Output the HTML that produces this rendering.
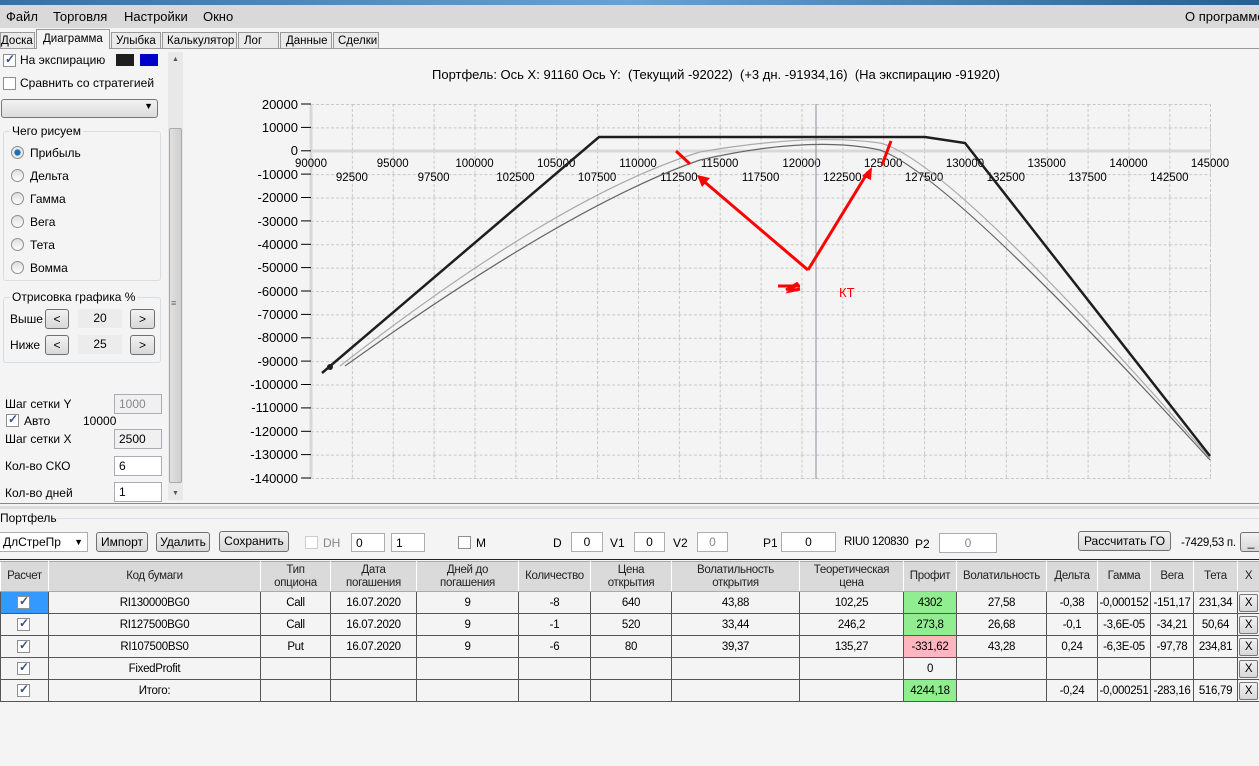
<!DOCTYPE html>
<html><head><meta charset="utf-8"><style>
*{box-sizing:border-box;margin:0;padding:0}
body{width:1259px;height:766px;overflow:hidden;background:#f4f4f4;font-family:"Liberation Sans",sans-serif;font-size:12px;color:#000;position:relative}
.a{position:absolute;white-space:nowrap}
.btn{position:absolute;border:1px solid #707070;border-radius:3px;background:linear-gradient(#f2f2f2,#d8d8d8);text-align:center;line-height:18px;font-size:12px;white-space:nowrap}
.inp{position:absolute;border:1px solid #abadb3;background:#fff;line-height:18px;padding-left:4px}
.cb{position:absolute;width:13px;height:13px;border:1px solid #8e8f8f;background:#fff}
.cb.c::after{content:"✓";position:absolute;left:1px;top:-3px;font-size:12px;color:#3a4f8a;font-weight:bold}
.rd{position:absolute;width:13px;height:13px;border-radius:50%;border:1px solid #8e8f8f;background:linear-gradient(#ddd,#fff)}
.grp{position:absolute;border:1px solid #d5dfe5;border-radius:3px}
.grp span{position:absolute;top:-8px;left:6px;background:#f4f4f4;padding:0 2px;white-space:nowrap}
.tab{position:absolute;top:32px;height:17px;border:1px solid #999;background:#eaeaea;font-size:11.5px;padding:2px 0 0 4px;white-space:nowrap;overflow:hidden}
table{position:absolute;left:0;top:561px;border-collapse:collapse;font-size:11.5px;letter-spacing:-0.3px;table-layout:fixed;width:1259px}
td{border:1px solid #555;text-align:center;height:22px;padding:0;background:#f4f4f4;white-space:nowrap;overflow:hidden}
tr.h td{background:#dadada;border-color:#aaa #fff;height:30px;line-height:13px;color:#222}
.g{background:#90ee90!important}.p{background:#ffb6c1!important}
.x{display:inline-block;width:19px;height:18px;border:1px solid #777;border-radius:2px;background:linear-gradient(#f2f2f2,#d8d8d8);line-height:16px}
</style></head><body>
<div class="a" style="left:0;top:0;width:1259px;height:5px;background:linear-gradient(90deg,#3a6ea5,#6d9fd0,#2c5d92)"></div>
<div class="a" style="left:0;top:5px;width:1259px;height:23px;background:#d9d9d9;font-size:13px">
<span class="a" style="left:6px;top:4px">Файл</span><span class="a" style="left:53px;top:4px">Торговля</span><span class="a" style="left:124px;top:4px">Настройки</span><span class="a" style="left:203px;top:4px">Окно</span><span class="a" style="left:1185px;top:4px">О программе</span></div>
<!-- tabs -->
<div class="a" style="left:0;top:48px;width:1259px;height:1px;background:#999"></div>
<div class="tab" style="left:0;width:35px;padding-left:0">Доска</div>
<div class="tab" style="left:36px;top:29px;width:74px;height:20px;border-bottom:none;background:#f4f4f4;padding:3px 0 0 6px">Диаграмма</div>
<div class="tab" style="left:111px;width:50px">Улыбка</div>
<div class="tab" style="left:162px;width:75px">Калькулятор</div>
<div class="tab" style="left:238px;width:41px;padding-left:5px">Лог</div>
<div class="tab" style="left:280px;width:52px;padding-left:5px">Данные</div>
<div class="tab" style="left:333px;width:46px">Сделки</div>
<!-- left panel -->
<div class="cb c" style="left:3px;top:54px"></div><span class="a" style="left:20px;top:53px">На экспирацию</span>
<div class="a" style="left:116px;top:54px;width:18px;height:12px;background:#1e1e1e"></div>
<div class="a" style="left:140px;top:54px;width:18px;height:12px;background:#0000c8"></div>
<div class="cb" style="left:3px;top:77px"></div><span class="a" style="left:20px;top:76px">Сравнить со стратегией</span>
<div class="a" style="left:1px;top:99px;width:157px;height:19px;border:1px solid #777;border-radius:3px;background:linear-gradient(#f2f2f2,#dcdcdc)"><span class="a" style="right:4px;top:1px;font-size:9px">▼</span></div>
<div class="grp" style="left:3px;top:131px;width:158px;height:150px"><span>Чего рисуем</span></div>
<div class="rd" style="left:11px;top:146px;background:radial-gradient(#1a6fb8 35%,#e8e8e8 45%)"></div><span class="a" style="left:30px;top:146px">Прибыль</span>
<div class="rd" style="left:11px;top:169px"></div><span class="a" style="left:30px;top:169px">Дельта</span>
<div class="rd" style="left:11px;top:192px"></div><span class="a" style="left:30px;top:192px">Гамма</span>
<div class="rd" style="left:11px;top:215px"></div><span class="a" style="left:30px;top:215px">Вега</span>
<div class="rd" style="left:11px;top:238px"></div><span class="a" style="left:30px;top:238px">Тета</span>
<div class="rd" style="left:11px;top:261px"></div><span class="a" style="left:30px;top:261px">Вомма</span>
<div class="grp" style="left:3px;top:297px;width:158px;height:66px"><span>Отрисовка графика %</span></div>
<span class="a" style="left:10px;top:312px">Выше</span><div class="btn" style="left:45px;top:309px;width:24px;height:20px">&lt;</div>
<div class="a" style="left:78px;top:309px;width:44px;height:19px;background:#ececec;text-align:center;line-height:19px">20</div><div class="btn" style="left:130px;top:309px;width:25px;height:20px">&gt;</div>
<span class="a" style="left:10px;top:338px">Ниже</span><div class="btn" style="left:45px;top:335px;width:24px;height:20px">&lt;</div>
<div class="a" style="left:78px;top:335px;width:44px;height:19px;background:#ececec;text-align:center;line-height:19px">25</div><div class="btn" style="left:130px;top:335px;width:25px;height:20px">&gt;</div>
<span class="a" style="left:5px;top:397px">Шаг сетки Y</span><div class="inp" style="left:114px;top:394px;width:48px;height:20px;background:#f0f0f0;color:#888">1000</div>
<div class="cb c" style="left:6px;top:414px"></div><span class="a" style="left:24px;top:414px">Авто</span><span class="a" style="left:83px;top:414px">10000</span>
<span class="a" style="left:5px;top:432px">Шаг сетки X</span><div class="inp" style="left:114px;top:429px;width:48px;height:20px;background:#f0f0f0">2500</div>
<span class="a" style="left:5px;top:459px">Кол-во СКО</span><div class="inp" style="left:114px;top:456px;width:48px;height:20px">6</div>
<span class="a" style="left:5px;top:486px">Кол-во дней</span><div class="inp" style="left:114px;top:482px;width:48px;height:20px">1</div>
<div class="a" style="left:168px;top:52px;width:15px;height:448px;background:#e8e8e8"></div>
<div class="a" style="left:169px;top:128px;width:13px;height:355px;background:linear-gradient(90deg,#e0e0e0,#cfcfcf);border:1px solid #aaa;border-radius:2px"></div>
<span class="a" style="left:172px;top:56px;font-size:7px;color:#555">▲</span><span class="a" style="left:172px;top:490px;font-size:7px;color:#555">▼</span>
<span class="a" style="left:171px;top:298px;font-size:9px;color:#666">≡</span>
<!-- chart -->
<div class="a" style="left:432px;top:67px;font-size:13px">Портфель: Ось X: 91160 Ось Y:&nbsp; (Текущий -92022)&nbsp; (+3 дн. -91934,16)&nbsp; (На экспирацию -91920)</div>
<svg class="a" style="left:0;top:0" width="1259" height="500" font-family="Liberation Sans, sans-serif" font-size="12">
<defs><pattern id="gp" x="311" y="104" width="40.873" height="23.375" patternUnits="userSpaceOnUse">
<line x1="0.5" y1="0" x2="0.5" y2="23.375" stroke="#c8c8c8" stroke-dasharray="3,2"/>
<line x1="0" y1="0.5" x2="40.873" y2="0.5" stroke="#c8c8c8" stroke-dasharray="3,2"/></pattern></defs>
<rect x="311" y="104" width="900" height="375" fill="url(#gp)"/>
<line x1="1210.5" y1="104" x2="1210.5" y2="479" stroke="#c8c8c8" stroke-dasharray="3,2"/>
<line x1="311" y1="104" x2="311" y2="479" stroke="#d8d8d8" stroke-width="3"/>
<line x1="311" y1="151" x2="1211" y2="151" stroke="#d8d8d8" stroke-width="3"/>
<g stroke="#000"><line x1="301" x2="311" y1="104" y2="104"/><line x1="301" x2="311" y1="127.4" y2="127.4"/><line x1="301" x2="311" y1="150.8" y2="150.8"/><line x1="301" x2="311" y1="174.1" y2="174.1"/><line x1="301" x2="311" y1="197.5" y2="197.5"/><line x1="301" x2="311" y1="220.9" y2="220.9"/><line x1="301" x2="311" y1="244.3" y2="244.3"/><line x1="301" x2="311" y1="267.6" y2="267.6"/><line x1="301" x2="311" y1="291" y2="291"/><line x1="301" x2="311" y1="314.4" y2="314.4"/><line x1="301" x2="311" y1="337.8" y2="337.8"/><line x1="301" x2="311" y1="361.1" y2="361.1"/><line x1="301" x2="311" y1="384.5" y2="384.5"/><line x1="301" x2="311" y1="407.9" y2="407.9"/><line x1="301" x2="311" y1="431.3" y2="431.3"/><line x1="301" x2="311" y1="454.6" y2="454.6"/><line x1="301" x2="311" y1="478" y2="478"/></g>
<g text-anchor="end" font-size="13"><text x="298" y="109">20000</text><text x="298" y="132">10000</text><text x="298" y="155">0</text><text x="298" y="179">-10000</text><text x="298" y="202">-20000</text><text x="298" y="226">-30000</text><text x="298" y="249">-40000</text><text x="298" y="272">-50000</text><text x="298" y="296">-60000</text><text x="298" y="319">-70000</text><text x="298" y="342">-80000</text><text x="298" y="366">-90000</text><text x="298" y="389">-100000</text><text x="298" y="412">-110000</text><text x="298" y="436">-120000</text><text x="298" y="459">-130000</text><text x="298" y="483">-140000</text></g>
<g text-anchor="middle" font-size="11.5"><text x="311" y="167">90000</text><text x="392.7" y="167">95000</text><text x="474.5" y="167">100000</text><text x="556.2" y="167">105000</text><text x="638" y="167">110000</text><text x="719.7" y="167">115000</text><text x="801.5" y="167">120000</text><text x="883.2" y="167">125000</text><text x="965" y="167">130000</text><text x="1046.7" y="167">135000</text><text x="1128.5" y="167">140000</text><text x="1210" y="167">145000</text>
<text x="351.9" y="181">92500</text><text x="433.6" y="181">97500</text><text x="515.4" y="181">102500</text><text x="597.1" y="181">107500</text><text x="678.9" y="181">112500</text><text x="760.6" y="181">117500</text><text x="842.3" y="181">122500</text><text x="924.1" y="181">127500</text><text x="1005.8" y="181">132500</text><text x="1087.6" y="181">137500</text><text x="1169.3" y="181">142500</text></g>
<line x1="816" y1="104" x2="816" y2="479" stroke="#8a8f99"/>
<path d="M340 366 Q560 195 700 152 Q810 133 880 143 Q950 160 1210 458" fill="none" stroke="#aaa" stroke-width="1.2"/>
<path d="M345 366 Q570 205 700 160 Q810 135 880 150 Q950 175 1210 460" fill="none" stroke="#666" stroke-width="1.2"/>
<path d="M322 373 L599 137 L925 137 L965 143 L1210 456" fill="none" stroke="#1e1e1e" stroke-width="2.5"/>
<circle cx="330" cy="367" r="3" fill="#1e1e1e"/>
<g stroke="#f00" stroke-width="3" fill="none"><line x1="808" y1="270" x2="700" y2="178"/><line x1="808" y1="270" x2="868" y2="172"/><line x1="676" y1="151" x2="690" y2="164"/><line x1="891" y1="141" x2="882" y2="165"/><path d="M778 286 L800 286 M786 290 L798 283 L790 291 L800 289"/></g>
<path d="M697 175 L710 178 L702 187 Z" fill="#f00"/><path d="M872 167 L871 180 L862 176 Z" fill="#f00"/>
<text x="839" y="297" fill="#f00" font-size="13">КТ</text>
</svg>
<!-- bottom -->
<div class="a" style="left:0;top:503px;width:1259px;height:1px;background:#888"></div>
<div class="a" style="left:0;top:506px;width:1259px;height:3px;background:#ddd"></div>
<span class="a" style="left:0;top:511px">Портфель</span><div class="a" style="left:55px;top:518px;width:1204px;height:1px;background:#dde"></div>
<div class="inp" style="left:-2px;top:532px;width:90px;height:20px;white-space:nowrap">ДлСтреПр<span class="a" style="right:4px;top:0;font-size:9px">▼</span></div>
<div class="btn" style="left:96px;top:532px;width:52px;height:20px">Импорт</div>
<div class="btn" style="left:156px;top:532px;width:54px;height:20px">Удалить</div>
<div class="btn" style="left:219px;top:531px;width:70px;height:21px">Сохранить</div>
<div class="cb" style="left:305px;top:536px;border-color:#ccc"></div><span class="a" style="left:323px;top:536px;color:#888">DH</span>
<div class="inp" style="left:351px;top:533px;width:34px;height:19px">0</div><div class="inp" style="left:391px;top:533px;width:34px;height:19px">1</div>
<div class="cb" style="left:458px;top:536px"></div><span class="a" style="left:476px;top:536px">M</span>
<span class="a" style="left:553px;top:536px">D</span><div class="inp" style="left:571px;top:532px;width:32px;height:20px;text-align:center;padding:0">0</div>
<span class="a" style="left:610px;top:536px">V1</span><div class="inp" style="left:634px;top:532px;width:31px;height:20px;text-align:center;padding:0">0</div>
<span class="a" style="left:673px;top:536px">V2</span><div class="inp" style="left:697px;top:532px;width:31px;height:20px;text-align:center;padding:0;color:#888">0</div>
<span class="a" style="left:763px;top:536px">P1</span><div class="inp" style="left:781px;top:532px;width:55px;height:20px;text-align:center;padding:0">0</div>
<span class="a" style="left:844px;top:536px;font-size:11.5px;letter-spacing:-0.3px">RIU0 120830</span><span class="a" style="left:915px;top:537px">P2</span>
<div class="inp" style="left:939px;top:533px;width:58px;height:20px;text-align:center;padding:0;color:#888">0</div>
<div class="btn" style="left:1078px;top:531px;width:93px;height:20px">Рассчитать ГО</div>
<span class="a" style="left:1181px;top:537px;font-size:11.5px;letter-spacing:-0.3px">-7429,53 п.</span><div class="btn" style="left:1240px;top:532px;width:22px;height:20px">_</div>
<div class="a" style="left:0;top:559px;width:1259px;height:1px;background:#222"></div>
<table>
<colgroup><col style="width:48px"><col style="width:212px"><col style="width:70px"><col style="width:86px"><col style="width:102px"><col style="width:72px"><col style="width:81px"><col style="width:128px"><col style="width:104px"><col style="width:53px"><col style="width:90px"><col style="width:51px"><col style="width:53px"><col style="width:43px"><col style="width:44px"><col style="width:22px"></colgroup>
<tr class="h"><td>Расчет</td><td>Код бумаги</td><td>Тип<br>опциона</td><td>Дата<br>погашения</td><td>Дней до<br>погашения</td><td>Количество</td><td>Цена<br>открытия</td><td>Волатильность<br>открытия</td><td>Теоретическая<br>цена</td><td>Профит</td><td>Волатильность</td><td>Дельта</td><td>Гамма</td><td>Вега</td><td>Тета</td><td>X</td></tr>
<tr><td style="background:#3399ff;position:relative"><div class="cb c" style="left:16px;top:4px"></div></td><td>RI130000BG0</td><td>Call</td><td>16.07.2020</td><td>9</td><td>-8</td><td>640</td><td>43,88</td><td>102,25</td><td class="g">4302</td><td>27,58</td><td>-0,38</td><td>-0,000152</td><td>-151,17</td><td>231,34</td><td><span class="x">X</span></td></tr>
<tr><td style="position:relative"><div class="cb c" style="left:16px;top:4px"></div></td><td>RI127500BG0</td><td>Call</td><td>16.07.2020</td><td>9</td><td>-1</td><td>520</td><td>33,44</td><td>246,2</td><td class="g">273,8</td><td>26,68</td><td>-0,1</td><td>-3,6E-05</td><td>-34,21</td><td>50,64</td><td><span class="x">X</span></td></tr>
<tr><td style="position:relative"><div class="cb c" style="left:16px;top:4px"></div></td><td>RI107500BS0</td><td>Put</td><td>16.07.2020</td><td>9</td><td>-6</td><td>80</td><td>39,37</td><td>135,27</td><td class="p">-331,62</td><td>43,28</td><td>0,24</td><td>-6,3E-05</td><td>-97,78</td><td>234,81</td><td><span class="x">X</span></td></tr>
<tr><td style="position:relative"><div class="cb c" style="left:16px;top:4px"></div></td><td>FixedProfit</td><td></td><td></td><td></td><td></td><td></td><td></td><td></td><td>0</td><td></td><td></td><td></td><td></td><td></td><td><span class="x">X</span></td></tr>
<tr><td style="position:relative"><div class="cb c" style="left:16px;top:4px"></div></td><td>Итого:</td><td></td><td></td><td></td><td></td><td></td><td></td><td></td><td class="g">4244,18</td><td></td><td>-0,24</td><td>-0,000251</td><td>-283,16</td><td>516,79</td><td><span class="x">X</span></td></tr>
</table>
</body></html>
